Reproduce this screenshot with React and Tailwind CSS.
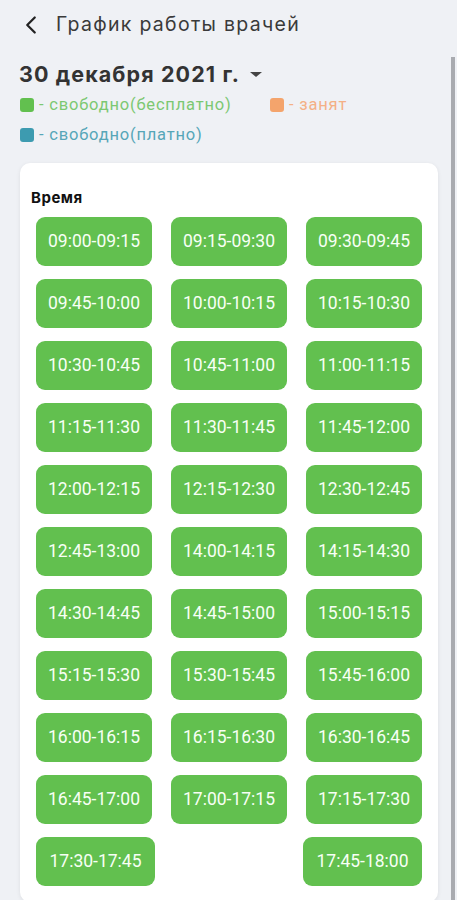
import { ChevronLeft } from 'lucide-react'

const slots = [
  '09:00-09:15', '09:15-09:30', '09:30-09:45',
  '09:45-10:00', '10:00-10:15', '10:15-10:30',
  '10:30-10:45', '10:45-11:00', '11:00-11:15',
  '11:15-11:30', '11:30-11:45', '11:45-12:00',
  '12:00-12:15', '12:15-12:30', '12:30-12:45',
  '12:45-13:00', '14:00-14:15', '14:15-14:30',
  '14:30-14:45', '14:45-15:00', '15:00-15:15',
  '15:15-15:30', '15:30-15:45', '15:45-16:00',
  '16:00-16:15', '16:15-16:30', '16:30-16:45',
  '16:45-17:00', '17:00-17:15', '17:15-17:30',
  '17:30-17:45', '17:45-18:00',
]

function Legend({ color, text, label }) {
  return (
    <div className="flex items-center">
      <span className={`w-[14px] h-[14px] rounded-[3px] ${color}`} />
      <span className={`ml-[5px] text-[16.5px] tracking-[0.8px] ${text}`}>- {label}</span>
    </div>
  )
}

export default function App() {
  return (
    <div
      className="relative w-[457px] h-[900px] overflow-hidden bg-[#eff1f5]"
      style={{ fontFamily: 'Roboto, "Noto Sans", sans-serif' }}
    >
      <div className="absolute right-[2px] top-[57px] w-[4px] h-[860px] bg-[#a9abb0]" />

      <header className="flex items-center h-[50px] pl-[16px]">
        <ChevronLeft className="w-[30px] h-[30px] text-[#222]" strokeWidth={1.8} />
        <h1
          className="ml-[10px] text-[19.5px] text-[#3a3a3a] tracking-[1.3px]"
          style={{ fontFamily: 'Inter, "Open Sans", sans-serif' }}
        >
          График работы врачей
        </h1>
      </header>

      <div className="pl-[19px] pt-[10px]">
        <div
          className="flex items-center h-[28px] text-[21.5px] font-bold text-[#333] tracking-[1.1px]"
          style={{ fontFamily: 'Inter, "Open Sans", sans-serif' }}
        >
          30 декабря 2021 г.
          <span className="ml-[10px] w-0 h-0 border-l-[6px] border-r-[6px] border-t-[5px] border-l-transparent border-r-transparent border-t-[#444]" />
        </div>
        <div className="flex mt-[5px] h-[24px] items-center">
          <div className="w-[251px] pl-[1px]">
            <Legend color="bg-[#62c04f]" text="text-[#7cc872]" label="свободно(бесплатно)" />
          </div>
          <Legend color="bg-[#f4a46c]" text="text-[#f4b086]" label="занят" />
        </div>
        <div className="flex mt-[8px] h-[20px] items-center pl-[1px]">
          <Legend color="bg-[#3d9bb0]" text="text-[#56a6b8]" label="свободно(платно)" />
        </div>
      </div>

      <div className="ml-[20px] mt-[18px] w-[418px] bg-white rounded-[10px] shadow-[0_1px_4px_rgba(0,0,0,0.08)] px-[16px] pt-[24px] pb-[16px]">
        <h2
          className="text-[15px] font-bold text-[#111] leading-[22px] -ml-[5px] tracking-[0.5px]"
          style={{ fontFamily: 'Inter, "Open Sans", sans-serif' }}
        >
          Время
        </h2>
        <div className="mt-[8px] flex flex-wrap justify-between gap-y-[13px]">
          {slots.map((s, i) => {
            const last = i >= 30
            return (
              <button
                key={s}
                className={`h-[49px] rounded-[9px] bg-[#62c04f] text-[#f7fff5] text-[17.5px] ${last ? 'w-[119px]' : 'w-[116px]'}`}
              >
                {s}
              </button>
            )
          })}
        </div>
      </div>
    </div>
  )
}
